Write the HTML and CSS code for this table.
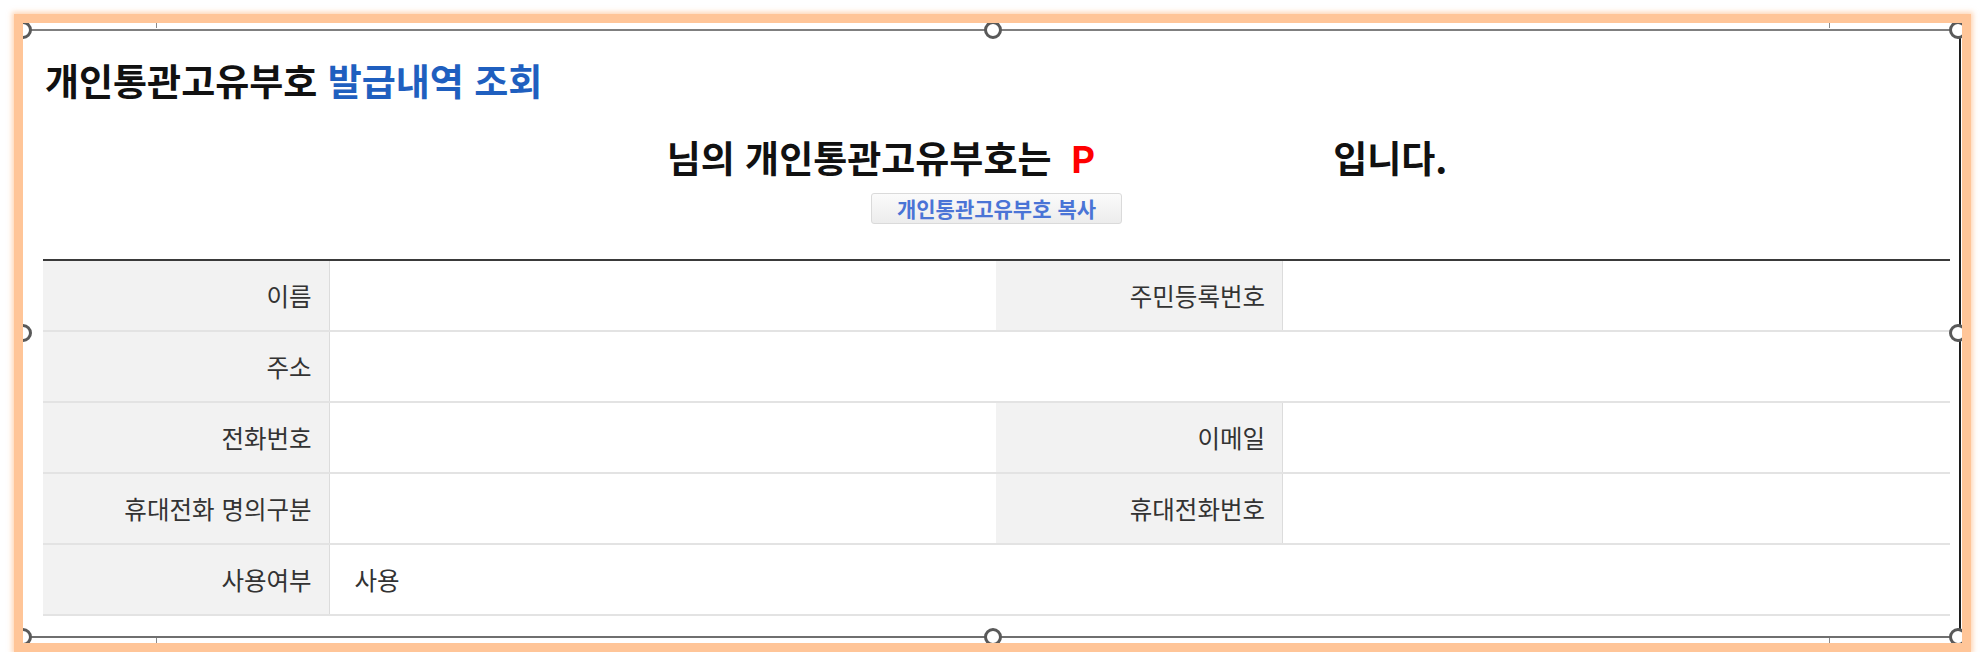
FILE: index.html
```html
<!DOCTYPE html>
<html lang="ko">
<head>
<meta charset="utf-8">
<title>개인통관고유부호 발급내역 조회</title>
<link rel="stylesheet" href="styles.css">
</head>
<body>
<div class="frame">
  <div class="sheet">
    <div class="content">
      <h1 class="title">개인통관고유부호 <span class="accent">발급내역 조회</span></h1>
      <p class="notice"><span class="blank blank-name"></span>님의 개인통관고유부호는<span class="code">P</span><span class="blank blank-num"></span>입니다.</p>
      <div class="copy-row"><button class="copy-btn" type="button">개인통관고유부호 복사</button></div>
      <table class="info">
        <colgroup>
          <col class="c-label"><col class="c-value"><col class="c-label"><col class="c-value">
        </colgroup>
        <tbody>
          <tr><th>이름</th><td></td><th>주민등록번호</th><td></td></tr>
          <tr><th>주소</th><td colspan="3"></td></tr>
          <tr><th>전화번호</th><td></td><th>이메일</th><td></td></tr>
          <tr><th>휴대전화 명의구분</th><td></td><th>휴대전화번호</th><td></td></tr>
          <tr><th>사용여부</th><td colspan="3">사용</td></tr>
        </tbody>
      </table>
    </div>
    <div class="selection">
      <div class="sel-line sel-top"></div>
      <div class="sel-line sel-bottom"></div>
      <div class="sel-line sel-right"></div>
      <div class="tick tick-tl"></div>
      <div class="tick tick-tr"></div>
      <div class="tick tick-bl"></div>
      <div class="tick tick-br"></div>
      <div class="handle h-tl"></div>
      <div class="handle h-tm"></div>
      <div class="handle h-tr"></div>
      <div class="handle h-ml"></div>
      <div class="handle h-mr"></div>
      <div class="handle h-bl"></div>
      <div class="handle h-bm"></div>
      <div class="handle h-br"></div>
    </div>
  </div>
</div>
</body>
</html>
```

FILE: styles.css
```css
html, body {
  margin: 0;
  padding: 0;
  background: #ffffff;
}

body {
  font-family: "Noto Sans CJK KR", "Noto Sans", sans-serif;
  color: #111;
  padding: 14px 0 0 14px;
}

.frame {
  width: 1939px;
  border: 9px solid #ffc598;
  box-shadow: 0 0 5px 2px rgba(255, 190, 140, 0.65);
  background: #fff;
}

.sheet {
  position: relative;
  height: 620px;
  overflow: hidden;
  background: #fff;
}

.content {
  padding: 37px 12px 0 20px;
}

.title {
  margin: 0 0 0 2px;
  font-size: 37px;
  line-height: 40px;
  font-weight: 700;
  color: #111;
  letter-spacing: 0;
}

.accent {
  color: #1f5fbf;
}

.notice {
  margin: 37px 0 0;
  display: flex;
  justify-content: center;
  align-items: center;
  font-size: 37px;
  line-height: 40px;
  font-weight: 700;
  color: #111;
}

.blank {
  display: inline-block;
}

.blank-name {
  width: 121px;
}

.blank-num {
  width: 238px;
}

.code {
  color: #ff0000;
  margin-left: 19px;
}

.copy-row {
  display: flex;
  justify-content: center;
  margin-top: 16px;
}

.copy-btn {
  height: 31px;
  width: 251px;
  padding: 0;
  border: 1px solid #dadada;
  border-radius: 3px;
  background: linear-gradient(#fbfbfb, #ececec);
  font-family: "Noto Sans CJK KR", "Noto Sans", sans-serif;
  font-size: 21px;
  font-weight: 700;
  line-height: 29px;
  color: #4a74d6;
}

.info {
  margin-top: 35px;
  width: 100%;
  border-collapse: collapse;
  table-layout: fixed;
  border-top: 2px solid #3a3a3a;
}

.c-label {
  width: 15%;
}

.c-value {
  width: 35%;
}

.info th,
.info td {
  height: 69px;
  padding: 0;
  border-bottom: 2px solid #e3e3e3;
  font-size: 24.5px;
  line-height: 30px;
  color: #333;
  vertical-align: middle;
}

.info th {
  background: #f2f2f2;
  font-weight: 400;
  text-align: right;
  padding-right: 17px;
  border-right: 1px solid #dcdcdc;
}

.info td {
  text-align: left;
  padding-left: 25px;
  background: #fff;
}

/* selection overlay (image handles drawn over the content) */
.selection {
  position: absolute;
  inset: 0;
  pointer-events: none;
}

.sel-line {
  position: absolute;
}

.sel-top {
  top: 6px;
  left: 0;
  right: 2px;
  height: 2px;
  background: #7f7f7f;
}

.sel-bottom {
  top: 613px;
  left: 0;
  right: 2px;
  height: 2px;
  background: #6f6f6f;
}

.sel-right {
  top: 7px;
  bottom: 6px;
  right: 1px;
  width: 2px;
  background: #1c1c1c;
}

.tick {
  position: absolute;
  width: 1px;
  height: 5px;
  background: #8a8a8a;
}

.tick-tl { left: 133px; top: 0; }
.tick-tr { left: 1806px; top: 0; }
.tick-bl { left: 133px; top: 615px; }
.tick-br { left: 1806px; top: 615px; }

.handle {
  position: absolute;
  width: 12px;
  height: 12px;
  margin: -9px 0 0 -9px;
  border: 3px solid #595959;
  border-radius: 50%;
  background: #fff;
}

.h-tl { left: 0; top: 7px; }
.h-tm { left: 970px; top: 7px; }
.h-tr { left: 1935px; top: 7px; }
.h-ml { left: 0; top: 310px; }
.h-mr { left: 1935px; top: 310px; }
.h-bl { left: 0; top: 614px; }
.h-bm { left: 970px; top: 614px; }
.h-br { left: 1935px; top: 614px; }
```
